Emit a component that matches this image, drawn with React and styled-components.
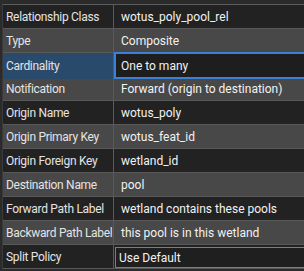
import React from "react";
import styled, { createGlobalStyle } from "styled-components";

const GlobalStyle = createGlobalStyle`
  html, body {
    margin: 0;
    padding: 0;
    background: #2b2b2b;
    overflow: hidden;
  }
  body {
    font-family: Roboto, "Noto Sans", sans-serif;
    font-size: 12px;
  }
`;

const rows = [
  { label: "Relationship Class", value: "wotus_poly_pool_rel" },
  { label: "Type", value: "Composite" },
  { label: "Cardinality", value: "One to many", selected: true },
  { label: "Notification", value: "Forward (origin to destination)" },
  { label: "Origin Name", value: "wotus_poly" },
  { label: "Origin Primary Key", value: "wotus_feat_id" },
  { label: "Origin Foreign Key", value: "wetland_id" },
  { label: "Destination Name", value: "pool" },
  { label: "Forward Path Label", value: "wetland contains these pools" },
  { label: "Backward Path Label", value: "this pool is in this wetland" },
  { label: "Split Policy", value: "Use Default", combo: true },
];

const Grid = styled.div`
  width: 302px;
  margin: 4px 0 0 2px;
  border-top: 1px solid #5c5c5c;
  border-left: 1px solid #3a3a3a;
`;

const Row = styled.div`
  display: grid;
  grid-template-columns: 111px 1fr;
  height: 23px;
  border-bottom: 1px solid #595959;
  background: ${(p) => (p.$alt ? "#484848" : "#222222")};
`;

const Label = styled.div`
  display: flex;
  align-items: center;
  padding-left: 3px;
  border-right: 1px solid #5a5a5a;
  color: #e4e4e4;
  letter-spacing: -0.3px;
  white-space: nowrap;
  overflow: hidden;
  background: ${(p) => (p.$selected ? "#2a4a6c" : "transparent")};
`;

const Value = styled.div`
  display: flex;
  align-items: center;
  padding-left: 7px;
  color: #f2f2f2;
  white-space: nowrap;
  overflow: hidden;
`;

const Editor = styled.div`
  display: flex;
  align-items: center;
  margin-top: -1px;
  height: 23px;
  padding-left: 5px;
  background: #1e1e1e;
  border: 2px solid #3b7fd6;
  border-right: none;
  color: #f2f2f2;
  white-space: nowrap;
  overflow: hidden;
`;

const Combo = styled.div`
  display: flex;
  align-items: center;
  margin: 2px 0 0 1px;
  padding-left: 3px;
  background: #1f1f1f;
  border: 1px solid #7d7d7d;
  border-right: none;
  color: #f2f2f2;
  white-space: nowrap;
  overflow: hidden;
`;

export default function App() {
  return (
    <>
      <GlobalStyle />
      <Grid>
        {rows.map((r, i) => (
          <Row key={r.label} $alt={i % 2 === 1 && !r.selected}>
            <Label $selected={r.selected}>{r.label}</Label>
            {r.selected ? (
              <Editor>{r.value}</Editor>
            ) : r.combo ? (
              <Combo>{r.value}</Combo>
            ) : (
              <Value>{r.value}</Value>
            )}
          </Row>
        ))}
      </Grid>
    </>
  );
}
